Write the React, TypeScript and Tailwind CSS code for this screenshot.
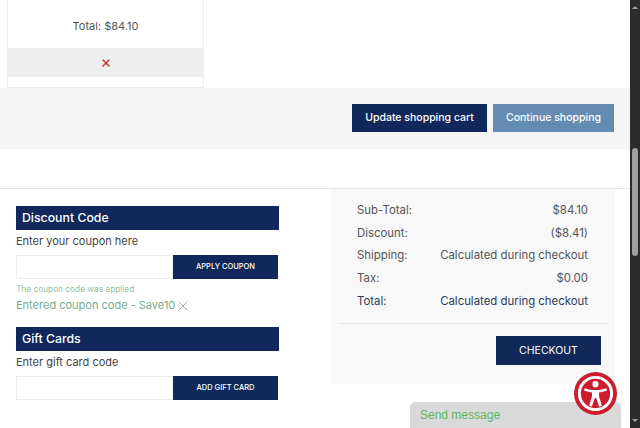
import { X } from "lucide-react";

const font = "font-['Inter','Open_Sans',sans-serif]";

const totals = [
  { label: "Sub-Total:", value: "$84.10" },
  { label: "Discount:", value: "($8.41)" },
  { label: "Shipping:", value: "Calculated during checkout" },
  { label: "Tax:", value: "$0.00" },
  { label: "Total:", value: "Calculated during checkout", dark: true },
];

const CodeForm = ({ title, hint, button }: { title: string; hint: string; button: string }) => (
  <div>
    <h2 className="flex h-6 w-[263px] items-center bg-[#10285a] pl-[6px] text-[12.300px] font-medium text-white">
      {title}
    </h2>
    <p className="mt-[4px] h-[21px] text-[11px] leading-[14px] text-[#444]">{hint}</p>
    <div className="flex h-6 w-[262px]">
      <input className="h-6 w-[157px] border border-[#eeeeee] bg-white" />
      <button className="h-6 w-[105px] bg-[#10285a] text-[7.500px] font-medium text-white">{button}</button>
    </div>
  </div>
);

const AccessibilityBadge = () => (
  <svg viewBox="0 0 44 44" className="absolute left-[574px] top-[372px] h-[43px] w-[43px]">
    <circle cx="22" cy="22" r="22" fill="#ce1c2f" />
    <circle cx="22" cy="22" r="16.500" fill="none" stroke="#fff" strokeWidth="3" />
    <circle cx="22" cy="12.500" r="3.200" fill="#fff" />
    <path
      d="M11 16.500c3.700 1.300 7.300 1.900 11 1.900s7.300-.6 11-1.900l.8 2.400c-2.900 1-5.500 1.700-8.200 2v4l2.900 9.600-2.800.8-3-8.800h-1.400l-3 8.800-2.800-.8 2.900-9.600v-4c-2.700-.3-5.300-1-8.200-2z"
      fill="#fff"
    />
  </svg>
);

export default function App() {
  return (
    <div className={`relative flex h-[428px] w-[640px] overflow-hidden bg-white ${font}`}>
      <main className="w-[630px]">
        <section className="h-[88px] pl-[7px]">
          <div className="flex h-[88px] w-[197px] flex-col border-x border-b border-[#eeeeee]">
            <p className="flex h-[48px] items-center justify-center pt-[5px] text-[11px] text-[#555]">Total: $84.10</p>
            <div className="flex h-[29px] items-center justify-center bg-[#eeeeee]">
              <X size={12} strokeWidth={3} className="text-[#d0343c]" />
            </div>
          </div>
        </section>

        <section className="flex h-[61px] items-start justify-end gap-[6px] bg-[#f5f5f5] pr-4 pt-4">
          <button className="h-[28px] w-[135px] bg-[#10285a] text-[10.500px] font-medium text-white">
            Update shopping cart
          </button>
          <button className="h-[28px] w-[121px] bg-[#648bb2] text-[10.500px] font-medium text-white">
            Continue shopping
          </button>
        </section>

        <div className="h-[40px] border-b border-[#e6e6e6]" />

        <section className="flex">
          <div className="flex w-[331px] flex-col gap-[12px] pl-4 pt-[17px]">
            <div>
              <CodeForm title="Discount Code" hint="Enter your coupon here" button="APPLY COUPON" />
              <p className="mt-[4px] h-[14px] text-[8.300px] leading-[12px] text-[#8fbfa5]">The coupon code was applied</p>
              <p className="flex h-[18px] items-center pb-[1px] text-[11px] text-[#74ab93]">
                Entered coupon code - Save10
                <X size={16} strokeWidth={1} className="text-[#777]" />
              </p>
            </div>
            <CodeForm title="Gift Cards" hint="Enter gift card code" button="ADD GIFT CARD" />
          </div>

          <div className="h-[195px] w-[284px] bg-[#f8f8f8] px-[7px] pt-[10px]">
            <div className="border-b border-[#e8e8e8] pb-[10px] pl-[19px] pr-[20px]">
              {totals.map((row) => (
                <div
                  key={row.label}
                  className={`flex h-[22.800px] items-center justify-between text-[11.400px] ${row.dark ? "text-[#2c3a58]" : "text-[#555]"}`}
                >
                  <span>{row.label}</span>
                  <span>{row.value}</span>
                </div>
              ))}
            </div>
            <div className="flex justify-end pr-[7px] pt-[12px]">
              <button className="h-[29px] w-[105px] bg-[#10285a] text-[10.500px] text-white">CHECKOUT</button>
            </div>
          </div>
        </section>
      </main>

      <aside className="flex w-[10px] flex-col items-center bg-[#2b2b2b] pt-[6px]">
        <span className="h-0 w-0 border-x-[3px] border-b-[3px] border-x-transparent border-b-[#a0a0a0]" />
        <span className="mt-[139px] h-[108px] w-[6px] rounded-[3px] bg-[#9e9e9e]" />
        <span className="mt-[163px] h-0 w-0 border-x-[3px] border-t-[3px] border-x-transparent border-t-[#a0a0a0]" />
      </aside>

      <div className="absolute left-[410px] top-[402px] flex h-[26px] w-[211px] items-center rounded-t-[5px] bg-[#d9d9d9] pl-[10px] font-['Liberation_Sans',sans-serif] text-[12px] text-[#5cb85c]">
        Send message
      </div>
      <AccessibilityBadge />
    </div>
  );
}
